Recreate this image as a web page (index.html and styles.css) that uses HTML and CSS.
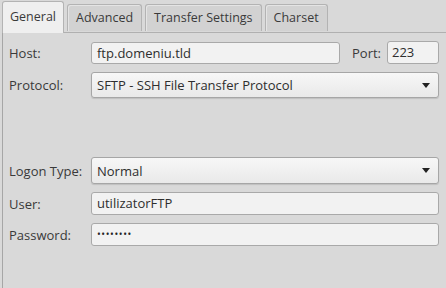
FILE: index.html
```html
<!DOCTYPE html>
<html lang="en">
<head>
  <meta charset="UTF-8">
  <title>Site Manager - General</title>
  <link rel="stylesheet" href="styles.css">
</head>
<body>
  <div class="tabs">
    <div class="tab active">General</div>
    <div class="tab">Advanced</div>
    <div class="tab">Transfer Settings</div>
    <div class="tab">Charset</div>
  </div>

  <div class="panel">
    <div class="row">
      <label class="label">Host:</label>
      <div class="host-group">
        <div class="field grow">ftp.domeniu.tld</div>
        <label class="port-label">Port:</label>
        <div class="field port">223</div>
      </div>
    </div>

    <div class="row">
      <label class="label">Protocol:</label>
      <div class="select protocol">
        <span>SFTP - SSH File Transfer Protocol</span>
        <span class="arrow"></span>
      </div>
    </div>

    <div class="spacer"></div>

    <div class="row">
      <label class="label">Logon Type:</label>
      <div class="select logon">
        <span>Normal</span>
        <span class="arrow"></span>
      </div>
    </div>

    <div class="row">
      <label class="label">User:</label>
      <div class="field">utilizatorFTP</div>
    </div>

    <div class="row">
      <label class="label">Password:</label>
      <div class="field dots">&bull;&bull;&bull;&bull;&bull;&bull;&bull;&bull;</div>
    </div>
  </div>
</body>
</html>
```

FILE: styles.css
```css
body {
  margin: 0;
  background-color: #d9d9d9;
  font-family: "Open Sans", "Noto Sans", sans-serif;
  font-size: 13px;
  color: #3a3a3a;
  height: 288px;
  overflow: hidden;
}
.tabs {
  display: flex;
  align-items: flex-end;
  padding-left: 2px;
  height: 32px;
  gap: 3px;
  font-size: 12.5px;
}
.tab {
  height: 26px;
  line-height: 26px;
  padding: 0 8px;
  background: #d2d2d2;
  border: 1px solid #b3b3b3;
  border-bottom: none;
  border-radius: 3px 3px 0 0;
  box-shadow: inset 1px 1px 0 #e4e4e4;
  margin-bottom: 1px;
}
.tab.active {
  height: 31px;
  line-height: 29px;
  padding: 0 7px;
  background: #efefef;
  box-shadow: none;
  margin-bottom: -1px;
  position: relative;
  z-index: 1;
}
.panel {
  margin-left: 2px;
  border-top: 1px solid #b0b0b0;
  border-left: 1px solid #a6a6a6;
  padding: 8px 7px 0 6px;
  display: flex;
  flex-direction: column;
  height: 260px;
}
.row {
  display: flex;
  align-items: center;
  margin-bottom: 8px;
}
.label {
  width: 82px;
  flex: none;
}
.host-group {
  flex: 1;
  display: flex;
  align-items: center;
}
.field {
  flex: 1;
  line-height: 21px;
  padding: 0 5px;
  background: #f2f2f2;
  border: 1px solid #a9a9a9;
  border-radius: 3px;
  box-sizing: border-box;
  height: 23px;
  color: #2e2e2e;
}
.field.grow {
  height: 22px;
  line-height: 20px;
}
.port-label {
  margin: 0 6px 0 12px;
}
.field.port {
  flex: none;
  width: 52px;
  padding: 0 4px;
}
.dots {
  font-size: 10px;
  letter-spacing: 0.6px;
  color: #222;
}
.select {
  flex: 1;
  display: flex;
  justify-content: space-between;
  align-items: center;
  box-sizing: border-box;
  padding: 0 8px 0 5px;
  background: linear-gradient(#f7f7f7, #e9e9e9);
  border: 1px solid #a6a6a6;
  border-radius: 3px;
  box-shadow: 0 1px 1px rgba(0, 0, 0, 0.12);
  color: #2e2e2e;
}
.select.protocol {
  height: 26px;
}
.select.logon {
  height: 27px;
}
.arrow {
  width: 0;
  height: 0;
  border-left: 4px solid transparent;
  border-right: 4px solid transparent;
  border-top: 5px solid #222;
}
.spacer {
  height: 51px;
}
```
